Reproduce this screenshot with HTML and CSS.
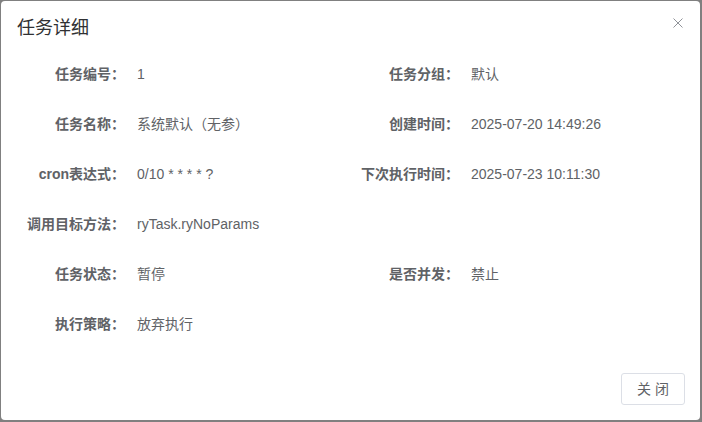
FILE: index.html
```html
<!DOCTYPE html>
<html lang="zh-CN">
<head>
<meta charset="utf-8">
<title>任务详细</title>
<link rel="stylesheet" href="styles.css">
</head>
<body>
<div class="dialog">
  <div class="header">
    <span class="title">任务详细</span>
    <button class="close" aria-label="Close">
      <svg width="10" height="10" viewBox="0 0 10 10"><path d="M0.5 0.5 L9.5 9.5 M9.5 0.5 L0.5 9.5" stroke="#909399" stroke-width="1" fill="none"/></svg>
    </button>
  </div>
  <div class="body">
    <div class="form">
      <div class="item"><span class="label">任务编号：</span><span class="value">1</span></div>
      <div class="item"><span class="label">任务分组：</span><span class="value">默认</span></div>
      <div class="item"><span class="label">任务名称：</span><span class="value">系统默认（无参）</span></div>
      <div class="item"><span class="label">创建时间：</span><span class="value">2025-07-20 14:49:26</span></div>
      <div class="item"><span class="label">cron表达式：</span><span class="value">0/10 * * * * ?</span></div>
      <div class="item"><span class="label">下次执行时间：</span><span class="value">2025-07-23 10:11:30</span></div>
      <div class="item full"><span class="label">调用目标方法：</span><span class="value">ryTask.ryNoParams</span></div>
      <div class="item"><span class="label">任务状态：</span><span class="value">暂停</span></div>
      <div class="item"><span class="label">是否并发：</span><span class="value">禁止</span></div>
      <div class="item"><span class="label">执行策略：</span><span class="value">放弃执行</span></div>
    </div>
  </div>
  <div class="footer">
    <button class="btn">关 闭</button>
  </div>
</div>
</body>
</html>
```

FILE: styles.css
```css
html, body {
  margin: 0;
  padding: 0;
}
body {
  background: #808080;
  width: 702px;
  height: 422px;
  overflow: hidden;
  font-family: "Liberation Sans", Arial, "Noto Sans CJK SC", sans-serif;
}
.dialog {
  position: relative;
  box-sizing: border-box;
  margin: 1px 0 0 1px;
  width: 699px;
  height: 419px;
  background: #ffffff;
  border-radius: 4px;
  display: flex;
  flex-direction: column;
}
.header {
  padding: 15px 16px 0 16px;
  line-height: 24px;
  height: 24px;
}
.title {
  font-size: 18px;
  color: #303133;
}
.close {
  position: absolute;
  top: 17px;
  right: 17px;
  width: 10px;
  height: 10px;
  padding: 0;
  margin: 0;
  border: none;
  background: transparent;
  display: block;
  cursor: pointer;
}
.close svg {
  display: block;
}
.body {
  padding: 9px 15px 0 16px;
}
.form {
  display: grid;
  grid-template-columns: 334px 334px;
}
.item {
  display: flex;
  height: 50px;
  line-height: 50px;
  font-size: 14px;
  color: #606266;
}
.item.full {
  grid-column: 1 / span 2;
}
.label {
  width: 120px;
  flex: none;
  box-sizing: border-box;
  padding-right: 12px;
  text-align: right;
  font-weight: bold;
  white-space: nowrap;
}
.value {
  white-space: nowrap;
}
.footer {
  margin-top: auto;
  padding: 0 15px 15px 16px;
  display: flex;
  justify-content: flex-end;
}
.btn {
  box-sizing: border-box;
  height: 32px;
  padding: 0 15px;
  font-family: "Liberation Sans", Arial, "Noto Sans CJK SC", sans-serif;
  font-size: 14px;
  line-height: 30px;
  color: #606266;
  background: #ffffff;
  border: 1px solid #dcdfe6;
  border-radius: 3px;
  cursor: pointer;
}
```
